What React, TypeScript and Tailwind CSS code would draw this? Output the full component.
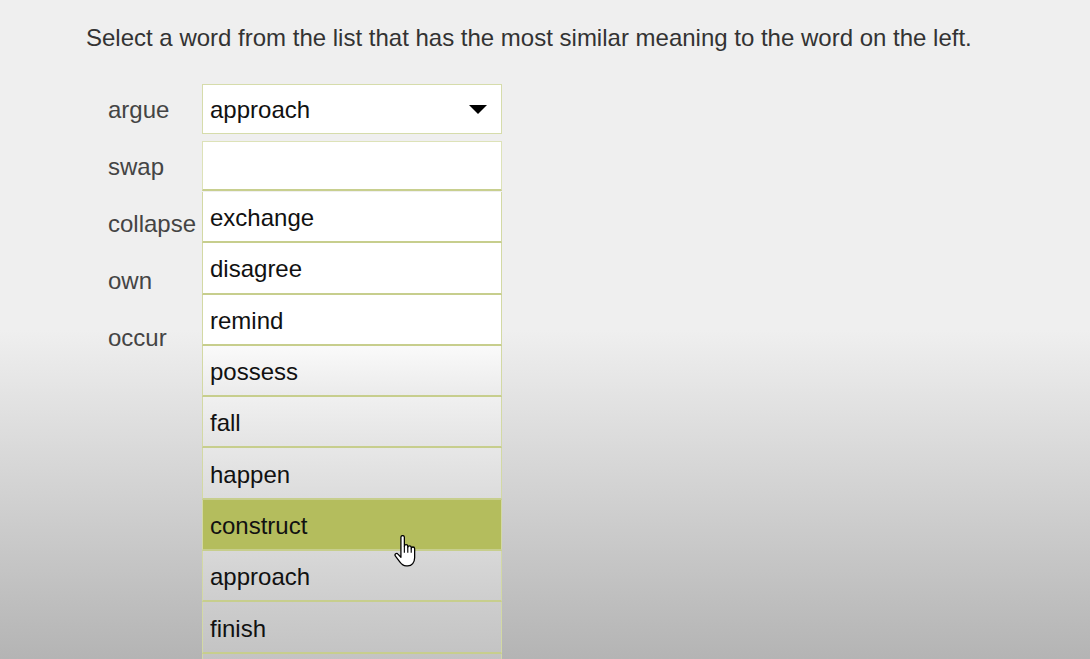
import React from 'react';

const rows = ['argue', 'swap', 'collapse', 'own', 'occur'];

const options = [
  { word: 'exchange', bg: 'bg-white' },
  { word: 'disagree', bg: 'bg-white' },
  { word: 'remind', bg: 'bg-white' },
  { word: 'possess', bg: 'bg-gradient-to-b from-[#fafafa] to-[#ebebeb]' },
  { word: 'fall', bg: 'bg-gradient-to-b from-[#f0f0f0] to-[#e4e4e4]' },
  { word: 'happen', bg: 'bg-gradient-to-b from-[#e7e7e7] to-[#dcdcdc]' },
  { word: 'construct', bg: 'bg-[#b4bd5d]' },
  { word: 'approach', bg: 'bg-gradient-to-b from-[#d8d8d8] to-[#cecece]' },
  { word: 'finish', bg: 'bg-gradient-to-b from-[#cdcdcd] to-[#c4c4c4]' },
  { word: '', bg: 'bg-gradient-to-b from-[#c4c4c4] to-[#bcbcbc]' },
];

function HandCursor() {
  return (
    <svg width="23" height="32" viewBox="0 0 20 28" className="absolute left-[394px] top-[535px]">
      <path
        d="M6 2 a1.5 1.5 0 0 1 3 0 V10 a1.5 1.5 0 0 1 3 0 V11 a1.5 1.5 0 0 1 3 0 V12 a1.5 1.5 0 0 1 3 0 V20 c0 4 -2.5 7 -6 7 H10.5 c-2.5 0 -4 -1.5 -5.5 -3.5 L1.2 18.5 a1.4 1.4 0 0 1 2.2 -1.8 L6 19.5 Z"
        fill="white"
        stroke="black"
        strokeWidth="1.1"
        strokeLinejoin="round"
      />
      <path d="M9 10 V15.5 M12 11 V15.5 M15 12 V15.5" stroke="black" strokeWidth="1" fill="none" />
    </svg>
  );
}

export default function App() {
  return (
    <div className="relative h-[659px] w-full overflow-hidden bg-[linear-gradient(to_bottom,#efefef_0px,#efefef_330px,#b4b4b4_659px)] font-['Liberation_Sans',Arial,sans-serif]">
      <p className="pl-[86px] pt-[24px] text-[24px] leading-[28px] text-[#333]">
        Select a word from the list that has the most similar meaning to the word on the left.
      </p>

      <div className="relative mt-[32px] pl-[108px]">
        {rows.map((label, i) => (
          <div key={label} className="flex h-[57px] items-start">
            <div className="flex h-[50px] w-[94px] items-center pt-[1px] text-[24px] text-[#444]">{label}</div>
            {i === 0 && (
              <div className="flex h-[50px] w-[300px] items-center justify-between border border-[#d6dcab] bg-white pl-[7px] pr-[14px] text-[24px] text-[#111]">
                <span className="pt-[1px]">approach</span>
                <svg width="18" height="9" viewBox="0 0 18 9">
                  <path d="M0 0 H18 L9 9 Z" fill="black" />
                </svg>
              </div>
            )}
            {i === 1 && (
              <div className="h-[50px] w-[300px] border border-[#dde2b8] border-b-2 border-b-[#c8cf8f] bg-white" />
            )}
          </div>
        ))}

        <div className="absolute left-[202px] top-[108px] w-[300px]">
          {options.map((o, i) => (
            <div
              key={i}
              className={`flex h-[51.3px] items-center border-x border-b-2 border-x-[#d3d9a4] border-b-[#c7ce8d] pl-[7px] pt-[3px] text-[24px] text-[#111] ${o.bg}`}
            >
              {o.word}
            </div>
          ))}
        </div>
      </div>

      <HandCursor />
    </div>
  );
}
